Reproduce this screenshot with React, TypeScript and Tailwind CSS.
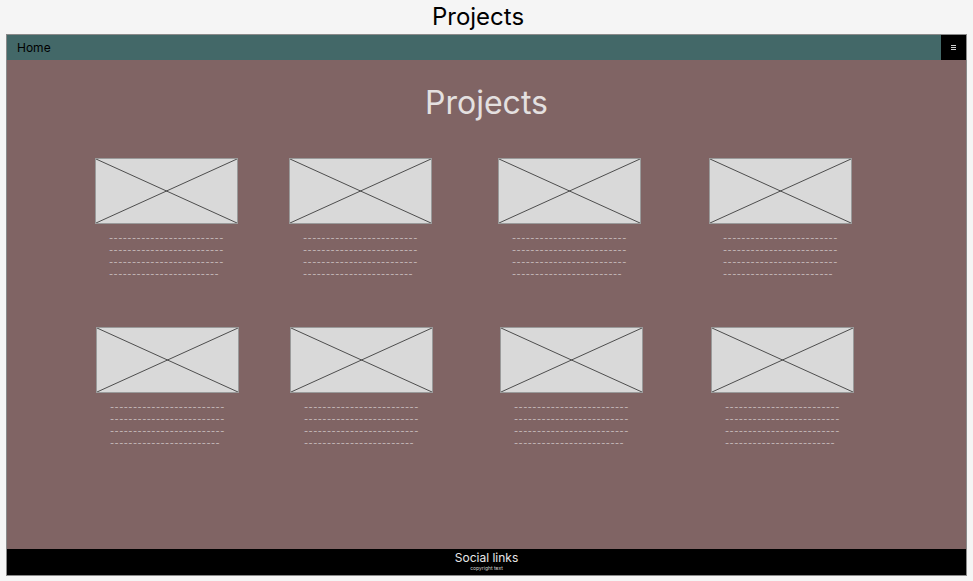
const rows = [
	{ pl: "pl-[88px]", gaps: ["", "ml-[51px]", "ml-[66px]", "ml-[68px]"], top: "mt-[35px]" },
	{ pl: "pl-[89px]", gaps: ["", "ml-[51px]", "ml-[67px]", "ml-[68px]"], top: "mt-[47px]" },
];

const dashes = "-------------------------";

function Placeholder() {
	return (
		<div className="relative w-[143px] h-[66px] bg-[#d9d9d9] border border-[#9a9a9a]">
			<svg className="absolute inset-0 w-full h-full" viewBox="0 0 143 66" preserveAspectRatio="none">
				<line x1="0" y1="0" x2="143" y2="66" stroke="#3a3a3a" strokeWidth="0.9" />
				<line x1="0" y1="66" x2="143" y2="0" stroke="#3a3a3a" strokeWidth="0.9" />
			</svg>
		</div>
	);
}

function Card({ className }: { className: string }) {
	return (
		<div className={`w-[143px] ${className}`}>
			<Placeholder />
			<div className="pl-[14px] pt-[8px] flex flex-col text-[9px] leading-[12px] text-[#cfc4c4] tracking-[0.45px] font-['Inter',sans-serif]">
				<span>{dashes}</span>
				<span>{dashes}</span>
				<span>{dashes}</span>
				<span>{dashes.slice(1)}</span>
			</div>
		</div>
	);
}

export default function App() {
	return (
		<div className="w-[973px] h-[581px] bg-[#f5f5f5] font-['Inter',sans-serif] overflow-hidden">
			<div className="w-[956px] h-[34px] flex items-center justify-center text-[24px] text-black">
				Projects
			</div>
			<div className="ml-[6px] w-[961px] h-[542px] border border-[#8a8a8a] flex flex-col">
				<header className="h-[25px] bg-[#436868] flex items-center justify-between">
					<span className="pl-[10px] text-[12px] text-black">Home</span>
					<button className="w-[25px] h-[25px] bg-black flex items-center justify-center">
						<span className="flex flex-col gap-[1px]">
							<span className="block w-[5px] h-[1px] bg-[#cfcfcf]" />
							<span className="block w-[5px] h-[1px] bg-[#cfcfcf]" />
							<span className="block w-[5px] h-[1px] bg-[#cfcfcf]" />
						</span>
					</button>
				</header>
				<main className="flex-1 bg-[#806464]">
					<h1 className="pt-[23px] text-center text-[32px] leading-[40px] text-[#e4e0e0]">Projects</h1>
					{rows.map((row, i) => (
						<div key={i} className={`flex ${row.pl} ${row.top}`}>
							{row.gaps.map((g, j) => (
								<Card key={j} className={g} />
							))}
						</div>
					))}
				</main>
				<footer className="h-[26px] bg-black flex flex-col items-center pt-[2px]">
					<span className="text-[12px] leading-[14px] text-[#e8e8e8]">Social links</span>
					<span className="text-[5px] leading-[6px] text-[#cfcfcf]">copyright text</span>
				</footer>
			</div>
		</div>
	);
}
